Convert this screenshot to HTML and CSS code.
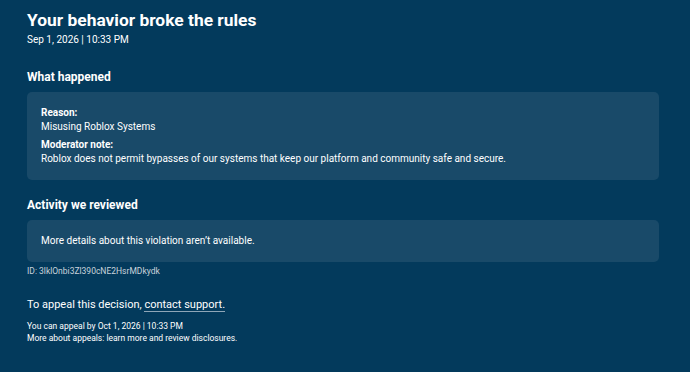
FILE: index.html
```html
<!DOCTYPE html>
<html lang="en">
<head>
    <meta charset="UTF-8">
    <title>Your behavior broke the rules</title>
    <link rel="stylesheet" href="styles.css">
</head>
<body>
    <div class="page">
        <h1>Your behavior broke the rules</h1>
        <div class="date">Sep 1, 2026 | 10:33 PM</div>

        <!-- What happened -->
        <h2>What happened</h2>
        <div class="card">
            <div class="label">Reason:</div>
            <div class="value">Misusing Roblox Systems</div>
            <div class="label second">Moderator note:</div>
            <div class="value">Roblox does not permit bypasses of our systems that keep our platform and community safe and secure.</div>
        </div>

        <!-- Activity -->
        <h2 class="activity">Activity we reviewed</h2>
        <div class="card short">
            <div class="value">More details about this violation aren’t available.</div>
        </div>
        <div class="id">ID: 3lklOnbi3Zl390cNE2HsrMDkydk</div>

        <p class="appeal">To appeal this decision, <a href="#">contact support.</a></p>
        <div class="small">You can appeal by Oct 1, 2026 | 10:33 PM</div>
        <div class="small">More about appeals: learn more and review disclosures.</div>
    </div>
</body>
</html>
```

FILE: styles.css
```css
body {
    font-family: 'Roboto', 'Inter', sans-serif;
    background: #033a5c;
    color: #fff;
    margin: 0;
    padding: 0;
}

.page {
    padding: 8px 31px 0 27px;
}

h1 {
    font-size: 17.4px;
    font-weight: 700;
    margin: 0;
    line-height: 24px;
}

.date {
    font-size: 10px;
    line-height: 14px;
    margin-top: 1px;
}

h2 {
    font-size: 12px;
    font-weight: 700;
    margin: 22px 0 7px;
    line-height: 16px;
}

h2.activity {
    margin-top: 17px;
}

.card {
    background: #194a69;
    border-radius: 5px;
    padding: 14px 14px 14px;
}

.card.short {
    padding: 14px 14px 14px;
}

.label {
    font-size: 10px;
    font-weight: 700;
    line-height: 14px;
}

.label.second {
    margin-top: 4px;
}

.value {
    font-size: 10px;
    line-height: 14px;
}

.id {
    font-size: 8.5px;
    color: #c9d3db;
    margin-top: 3px;
    line-height: 12px;
}

.appeal {
    font-size: 11px;
    margin: 20px 0 8px;
    line-height: 15px;
}

.appeal a {
    color: #fff;
    text-decoration: none;
    border-bottom: 1px solid #8fa6b8;
}

.small {
    font-size: 8.5px;
    line-height: 12px;
}
```
